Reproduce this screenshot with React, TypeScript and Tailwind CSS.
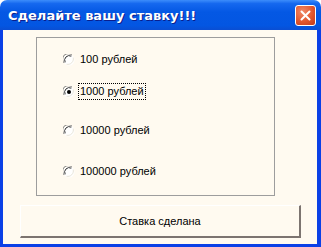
import React from 'react';

const options = ['100 рублей', '1000 рублей', '10000 рублей', '100000 рублей'];
const selected = 1;
// расстояния между строками в рамке неравные, как на форме
const rowMargins = ['mt-[13px]', 'mt-[15px]', 'mt-[22px]', 'mt-[24px]'];

const Radio: React.FC<{ checked: boolean }> = ({ checked }) => (
  <svg width="12" height="12" viewBox="0 0 12 12" className="shrink-0">
    <circle cx="6" cy="6" r="5.5" fill="#ffffff" />
    <path d="M1.2 9 A5.5 5.5 0 0 1 9 1.2" fill="none" stroke="#7a7a7a" strokeWidth="1" />
    <path d="M2.2 8.3 A4.5 4.5 0 0 1 8.3 2.2" fill="none" stroke="#303030" strokeWidth="1" />
    <path d="M10.2 3.5 A5.5 5.5 0 0 1 3.5 10.2" fill="none" stroke="#e8e4d8" strokeWidth="1" />
    {checked && <circle cx="6" cy="6" r="2" fill="#000000" />}
  </svg>
);

const App: React.FC = () => {
  return (
    <div className="w-[321px] h-[247px] flex flex-col font-['Liberation_Sans',Arial,sans-serif] text-[11px] text-black">
      {/* заголовок окна */}
      <div className="h-[30px] shrink-0 rounded-t-[7px] bg-[linear-gradient(180deg,#3c8dfb_0%,#1568ef_12%,#0458e4_40%,#0356e2_85%,#0a4ed3_100%)] flex items-center pl-[8px] pr-[5px]">
        <span className="text-white font-bold text-[13px] font-['DejaVu_Sans',sans-serif] [text-shadow:1px_1px_0_#0a1e8c] flex-1 leading-none">
          Сделайте вашу ставку!!!
        </span>
        <div className="w-[21px] h-[21px] rounded-[3px] border border-white bg-[radial-gradient(circle_at_35%_30%,#f08a6a_0%,#e2572e_55%,#c0391a_100%)] flex items-center justify-center">
          <svg width="11" height="11" viewBox="0 0 11 11">
            <path d="M1.5 1.5 L9.5 9.5 M9.5 1.5 L1.5 9.5" stroke="#ffffff" strokeWidth="2" strokeLinecap="round" />
          </svg>
        </div>
      </div>

      {/* клиентская область */}
      <div className="flex-1 flex flex-col bg-[#fffaf0] border-l-[3px] border-r-[4px] border-b-[3px] border-[#0b40e6]">
        <div className="ml-[33px] mt-[7px] w-[239px] h-[159px] border border-[#9d9d9d] flex flex-col pl-[26px]">
          {options.map((label, i) => (
            <div key={label} className={`${rowMargins[i]} h-[17px] flex items-center`}>
              <Radio checked={i === selected} />
              <span
                className={`ml-[3px] h-[17px] flex items-center px-[1px] leading-none ${
                  i === selected ? 'border border-dotted border-black' : 'border border-transparent'
                }`}
              >
                {label}
              </span>
            </div>
          ))}
        </div>

        <button className="ml-[17px] mt-[9px] w-[281px] h-[33px] bg-[#fffaf0] border-t border-l border-white border-r-2 border-b-2 border-r-[#7c7470] border-b-[#7c7470] flex items-center justify-center text-[11px]">
          Ставка сделана
        </button>
      </div>
    </div>
  );
};

export default App;
